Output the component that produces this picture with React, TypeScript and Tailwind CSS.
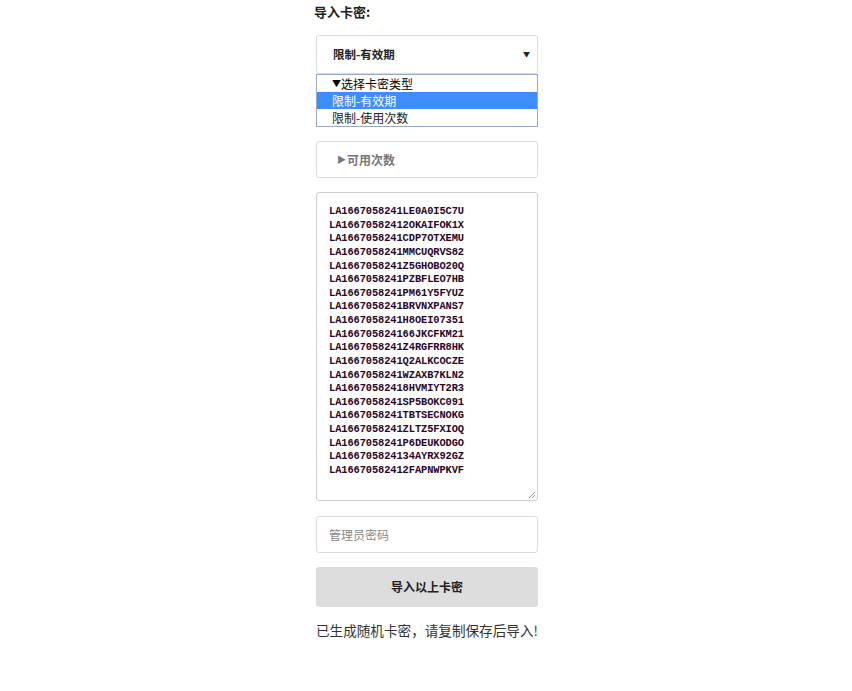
import React from "react";

const keys = [
	"LA1667058241LE0A0I5C7U",
	"LA16670582412OKAIFOK1X",
	"LA1667058241CDP7OTXEMU",
	"LA1667058241MMCUQRVS82",
	"LA1667058241Z5GHOBO20Q",
	"LA1667058241PZBFLEO7HB",
	"LA1667058241PM61Y5FYUZ",
	"LA1667058241BRVNXPANS7",
	"LA1667058241H8OEI07351",
	"LA166705824166JKCFKM21",
	"LA1667058241Z4RGFRR8HK",
	"LA1667058241Q2ALKCOCZE",
	"LA1667058241WZAXB7KLN2",
	"LA16670582418HVMIYT2R3",
	"LA1667058241SP5BOKC091",
	"LA1667058241TBTSECNOKG",
	"LA1667058241ZLTZ5FXIOQ",
	"LA1667058241P6DEUKODGO",
	"LA166705824134AYRX92GZ",
	"LA16670582412FAPNWPKVF",
];

const cjk = "font-['Microsoft_YaHei','Noto_Sans_CJK_SC',sans-serif]";

const App = () => {
	return (
		<div className={`w-[852px] h-[691px] bg-white text-[#333] ${cjk}`}>
			<div className="ml-[316px] w-[222px] flex flex-col pt-[3px]">
				<div className="-ml-[2px] text-[13px] font-bold leading-[18px] text-[#222]">
					导入卡密:
				</div>

				{/* select with open list */}
				<div className="mt-[14px] h-[39px] border border-[#dcdcdc] rounded-[3px] flex items-center justify-between pl-[16px] pr-[7px]">
					<span className="text-[11.5px] font-bold text-[#222]">限制-有效期</span>
					<span className="text-[7px] text-[#222]">▼</span>
				</div>
				<div className="h-[53px] border border-[#9aa8c8] flex flex-col text-[12px] leading-[17px]">
					<div className="pl-[15px] text-black flex items-center">
						<span className="text-[9px]">▼</span>
						<span>选择卡密类型</span>
					</div>
					<div className="pl-[15px] bg-[#3e8dff] text-white">限制-有效期</div>
					<div className="pl-[15px] text-[#222]">限制-使用次数</div>
				</div>

				<div className="mt-[14px] h-[37px] border border-[#dcdcdc] rounded-[3px] flex items-center pl-[20px] text-[#777]">
					<span className="text-[9px] mr-[1px]">▶</span>
					<span className="text-[12px] font-bold">可用次数</span>
				</div>

				<div className="relative mt-[14px] h-[309px] border border-[#cfcfcf] rounded-[3px] px-[12px] pt-[12px]">
					<div className="font-['Liberation_Mono',monospace] font-bold text-[10.4px] leading-[13.63px] text-[#2a062a] tracking-[-0.1px]">
						{keys.map((k) => (
							<div key={k}>{k}</div>
						))}
					</div>
					<svg
						className="absolute right-[1px] bottom-[1px]"
						width="8"
						height="8"
						viewBox="0 0 8 8"
					>
						<path d="M7 1 L1 7 M7 4 L4 7" stroke="#999" strokeWidth="1" />
					</svg>
				</div>

				<div className="mt-[15px] h-[37px] border border-[#dcdcdc] rounded-[3px] flex items-center pl-[12px]">
					<span className="text-[12px] text-[#888]">管理员密码</span>
				</div>

				<div className="mt-[14px] h-[40px] bg-[#dddddd] rounded-[3px] flex items-center justify-center">
					<span className="text-[12px] font-bold text-[#222]">导入以上卡密</span>
				</div>

				<div className="mt-[14px] text-[13.6px] leading-[18px] text-[#333] whitespace-nowrap">
					已生成随机卡密，请复制保存后导入!
				</div>
			</div>
		</div>
	);
};

export default App;
